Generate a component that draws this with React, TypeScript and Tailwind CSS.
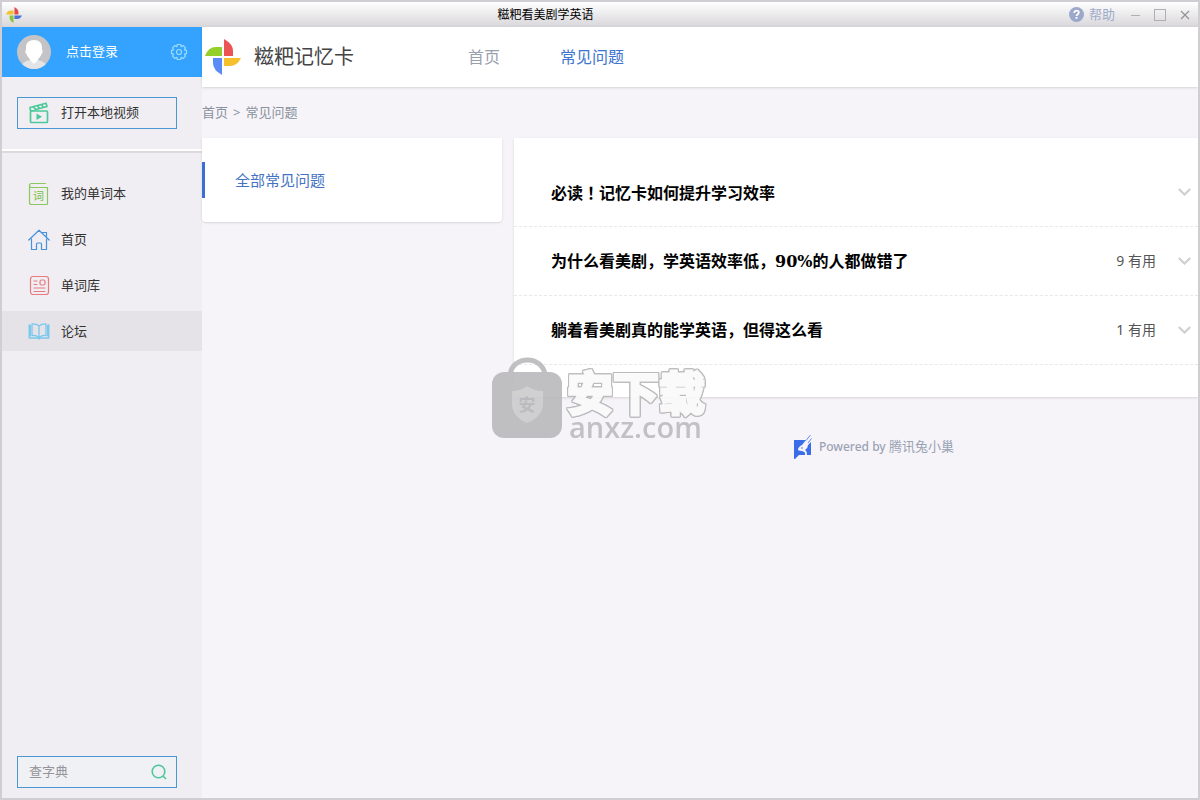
import { useState, type ReactNode } from "react";

const Pinwheel = ({ colors, className }: { colors: string[]; className: string }) => (
  <svg viewBox="0 0 36 36" className={className} aria-hidden="true">
    <path d="M0 17Q3 8 11 8H17V17Z" fill={colors[0]} />
    <path d="M19 0Q28 5 28 12V17H19Z" fill={colors[1]} />
    <path d="M19 19H36Q32 27 25 27H19Z" fill={colors[2]} />
    <path d="M8 19H17V36Q8 31 8 24Z" fill={colors[3]} />
  </svg>
);

const WordBookIcon = () => (
  <svg width="22" height="24" viewBox="0 0 22 24" fill="none" stroke="#8cc95c" strokeWidth="1.200" strokeLinecap="round">
    <path d="M1.500 4V20.500Q1.500 22.500 3.500 22.500H18.500Q19.500 22.500 19.500 21.500V5.500H3.500Q1.500 5.500 1.500 3.500T3.500 1.500H17.500" />
    <text x="5" y="18" fontSize="11" fontWeight="500" fill="#8cc95c" stroke="none">词</text>
  </svg>
);

const HomeIcon = () => (
  <svg width="22" height="22" viewBox="0 0 22 22" fill="none" stroke="#4792dc" strokeWidth="1.200" strokeLinecap="round" strokeLinejoin="round">
    <path d="M.8 11L11 1.200L21.200 11M3.500 10V20.500H8.500V15Q8.500 14 9.500 14H12.500Q13.500 14 13.500 15V20.500H18.500V10M14.500 3.500H18.500V7.500" />
  </svg>
);

const LibraryIcon = () => (
  <svg width="22" height="22" viewBox="0 0 22 22" fill="none" stroke="#e77b7f" strokeWidth="1.200" strokeLinecap="round">
    <rect x="2.500" y="1.500" width="18" height="18" rx="2.500" />
    <rect x="12" y="5" width="5" height="5" rx="1.500" />
    <path d="M6 6H9M6 9.500H9M6 13H17M6 16.500H17" />
  </svg>
);

const ForumIcon = () => (
  <svg width="22" height="22" viewBox="0 0 22 22" fill="none" stroke="#78c8ee" strokeWidth="1.300" strokeLinejoin="round">
    <path d="M11 5C9 3 6.500 2.700 4 2.800V14.500C6.500 14.300 9 14.800 11 16.500C13 14.800 15.500 14.300 18 14.500V2.800C15.500 2.700 13 3 11 5ZM11 5V16.500" />
    <path d="M2.200 4H1.200V17H9.500L11 18L12.500 17H20.800V4H19.800M2.300 4V15.500M19.700 4V15.500" />
  </svg>
);

const ClapperIcon = () => (
  <svg width="20" height="22" viewBox="0 0 20 22" fill="none" stroke="#4cc99b" strokeWidth="1.700" strokeLinejoin="round">
    <rect x="1.500" y="9" width="17" height="11.500" rx="1" />
    <path d="M1.500 9L1 5.500L17 1.200L18 4.500L1.500 9M4.500 5L6.500 7.500M8.500 3.800L10.500 6.500M12.500 2.700L14.500 5.400" />
    <path d="M7.500 11.500V18L13 14.700Z" fill="#4cc99b" stroke="none" />
  </svg>
);

const GearIcon = () => (
  <svg width="18" height="18" viewBox="0 0 18 18" fill="none" stroke="#9adbf8" strokeWidth="1.200" strokeLinejoin="round">
    <path d="M7.300 1.500H10.700L11.200 3.600L13.200 2.500L15.500 4.800L14.400 6.800L16.500 7.300V10.700L14.400 11.200L15.500 13.200L13.200 15.500L11.200 14.400L10.700 16.500H7.300L6.800 14.400L4.800 15.500L2.500 13.200L3.600 11.200L1.500 10.700V7.300L3.600 6.800L2.500 4.800L4.800 2.500L6.800 3.600Z" />
    <circle cx="9" cy="9" r="2.500" />
  </svg>
);

const Avatar = () => (
  <svg width="34" height="34" viewBox="0 0 34 34" aria-hidden="true">
    <defs>
      <clipPath id="avatar">
        <circle cx="17" cy="17" r="17" />
      </clipPath>
    </defs>
    <g clipPath="url(#avatar)">
      <rect width="34" height="34" fill="#c4c4c6" />
      <path d="M3 34Q4 27 13 25H21Q30 27 31 34Z" fill="#e4e4e6" />
      <path d="M13 21H21V25L17 29L13 25Z" fill="#fff" />
      <path d="M17 5C22 5 25 8 25 12V15C26 15 26 18 24.500 19C23 23 20 26 17 26S11 23 9.500 19C8 18 8 15 9 15V12C9 8 12 5 17 5Z" fill="#fff" />
    </g>
  </svg>
);

const RabbitIcon = () => (
  <svg width="18" height="24" viewBox="0 0 18 24" aria-hidden="true">
    <path d="M0 5H12L8 10Q4 12 4 15Q5 16 8 16Q12 17 11 20H5L1 24H0Z" fill="#3a6ee8" />
    <path d="M17 7V20H13Q13 16 11 15Q14 13 14 10Z" fill="#3a6ee8" />
    <path d="M16.500 0L12 5.500M17.500 3.500L14 8" stroke="#3a6ee8" strokeWidth=".8" />
    <circle cx="8" cy="13" r=".8" fill="#3a6ee8" />
  </svg>
);

const Watermark = () => (
  <div className="pointer-events-none absolute left-[490px] top-[355px] flex gap-1 text-[#bcbcbe] opacity-90">
    <svg width="71" height="82" viewBox="0 0 71 82" aria-hidden="true">
      <path d="M18 18C20 -2 51 -2 53 18" fill="none" stroke="#bababc" strokeWidth="5" />
      <rect y="15" width="70" height="66" rx="12" fill="#bababc" />
      <path d="M35 29Q42 34 51 34V48Q50 60 35 66Q21 60 20 48V34Q29 34 35 29Z" fill="#cbcbcd" />
      <text x="35" y="54" textAnchor="middle" fontSize="17" fontWeight="700" fill="#b6b6b8">安</text>
    </svg>
    <div className="pt-3">
      <p className="text-[46px] font-bold leading-[46px] text-[#fafafa] [-webkit-text-stroke:3px_#fafafa] [filter:drop-shadow(1px_0_0_#b4b4b6)_drop-shadow(-1px_0_0_#b4b4b6)_drop-shadow(0_1px_0_#b4b4b6)_drop-shadow(0_-1px_0_#b4b4b6)]">
        安下载
      </p>
      <p className="pl-[2px] font-['Open_Sans'] text-[29px] font-semibold leading-6">anxz.com</p>
    </div>
  </div>
);

const menu: { label: string; icon: ReactNode }[] = [
  { label: "我的单词本", icon: <WordBookIcon /> },
  { label: "首页", icon: <HomeIcon /> },
  { label: "单词库", icon: <LibraryIcon /> },
  { label: "论坛", icon: <ForumIcon /> },
];

const questions = [
  { title: "必读！记忆卡如何提升学习效率", useful: 0 },
  { title: "为什么看美剧，学英语效率低，90%的人都做错了", useful: 9 },
  { title: "躺着看美剧真的能学英语，但得这么看", useful: 1 },
];

const TitleBar = () => (
  <header className="flex h-[25px] items-center bg-linear-to-b from-white to-[#d8d6d9] pl-1 pr-2">
    <Pinwheel className="size-4" colors={["#f2c230", "#e5484d", "#4a6fd8", "#8cc63f"]} />
    <h1 className="flex-1 text-center text-xs text-black">糍粑看美剧学英语</h1>
    <button className="flex items-center gap-[5px] text-[13px] text-[#a0abca]">
      <svg width="15" height="15" viewBox="0 0 15 15" aria-hidden="true">
        <circle cx="7.500" cy="7.500" r="7.500" fill="#9ca8cb" />
        <path d="M5.200 6Q5.200 3.700 7.500 3.700T9.800 5.700Q9.800 6.700 8.500 7.400Q7.500 8 7.500 9" fill="none" stroke="#fff" strokeWidth="1.700" />
        <rect x="6.600" y="10" width="1.800" height="1.800" fill="#fff" />
      </svg>
      帮助
    </button>
    <div className="ml-4 flex items-center gap-[14px] text-[#b0aeb2]">
      <button aria-label="最小化">
        <svg width="9" height="12" viewBox="0 0 9 12" stroke="currentColor">
          <path d="M0 6.500H9" />
        </svg>
      </button>
      <button aria-label="最大化">
        <svg width="12" height="12" viewBox="0 0 12 12" fill="none" stroke="currentColor">
          <rect x=".5" y=".5" width="11" height="11" />
        </svg>
      </button>
      <button aria-label="关闭">
        <svg width="10" height="10" viewBox="0 0 10 10" stroke="#919094" strokeWidth="1.100">
          <path d="M1 1L9 9M9 1L1 9" />
        </svg>
      </button>
    </div>
  </header>
);

const Sidebar = () => {
  const [active, setActive] = useState("论坛");

  return (
    <aside className="flex w-[200px] shrink-0 flex-col bg-[#f0eef2] text-[13px] text-[#333]">
      <div className="flex h-[50px] items-center bg-[#33a3ff] pl-[15px] pr-[14px] text-white">
        <Avatar />
        <button className="ml-[15px]">点击登录</button>
        <button className="ml-auto" aria-label="设置">
          <GearIcon />
        </button>
      </div>
      <div className="border-b-2 border-white px-[15px] py-5">
        <button className="flex h-8 w-[160px] items-center gap-3 border border-[#4a98d3] pl-[11px]">
          <ClapperIcon />
          打开本地视频
        </button>
      </div>
      <nav className="flex flex-col gap-[6px] border-t-2 border-[#dcdadd] pt-5">
        {menu.map((item) => (
          <button
            key={item.label}
            onClick={() => setActive(item.label)}
            className={`flex h-10 items-center gap-[11px] pl-[26px] pt-px ${active === item.label ? "bg-[#e5e3e7]" : ""}`}
          >
            {item.icon}
            {item.label}
          </button>
        ))}
      </nav>
      <form className="mx-[15px] mb-[10px] mt-auto flex h-8 w-[160px] items-center border border-[#4a98d3] bg-[#eff1f4] pl-[11px] pr-[9px]">
        <input
          aria-label="查字典"
          placeholder="查字典"
          className="min-w-0 flex-1 outline-none placeholder:text-[#96949a]"
        />
        <button type="button" aria-label="搜索">
          <svg width="16" height="16" viewBox="0 0 16 16" fill="none" stroke="#4fc79a" strokeWidth="1.600">
            <circle cx="7.500" cy="7.500" r="6.300" />
            <path d="M12 12L15 15" />
          </svg>
        </button>
      </form>
    </aside>
  );
};

const QuestionList = () => (
  <ul className="bg-white pb-8 pt-5 shadow-sm">
    {questions.map((q) => (
      <li key={q.title} className="border-b border-dashed border-[#e8e8ea]">
        <button className="flex h-[68px] w-full items-center pl-[37px] pr-[7px] text-left">
          <span className="flex-1 text-base font-bold text-black">
            {q.title.split(/(90%|！)/).map((part) => {
              if (part === "90%") return <span key={part} className="font-['DejaVu_Serif']">{part}</span>;
              if (part === "！") return <span key={part} lang="zh-TW" className="font-['Noto_Sans_CJK_TC']">{part}</span>;
              return part;
            })}
          </span>
          {q.useful > 0 && <span className="mr-[22px] text-sm text-[#555]">{q.useful} 有用</span>}
          <svg width="13" height="8" viewBox="0 0 13 8" fill="none" stroke="#cfcfd1" strokeWidth="2.200" aria-hidden="true">
            <path d="M.8 1L6.500 6.500L12.200 1" />
          </svg>
        </button>
      </li>
    ))}
  </ul>
);

export default function App() {
  return (
    <div className="relative flex min-h-screen flex-col overflow-hidden border-2 border-[#d0ced2] bg-[#f6f4f8] font-['Noto_Sans','Noto_Sans_CJK_SC',sans-serif]" lang="zh-CN">
      <TitleBar />
      <div className="flex flex-1">
        <Sidebar />
        <div className="min-w-0 flex-1">
          <header className="flex h-[60px] items-center bg-white pl-[3px] shadow-sm">
            <Pinwheel className="size-9" colors={["#95d02a", "#ec5355", "#f6bf2c", "#5a8bf7"]} />
            <p className="ml-[13px] text-xl text-[#444]">糍粑记忆卡</p>
            <nav className="ml-[114px] flex gap-[60px] text-base">
              <a href="#home" className="text-[#9a9fb0]">首页</a>
              <a href="#faq" className="text-[#3d74cf]">常见问题</a>
            </nav>
          </header>
          <div className="flex h-[51px] items-center gap-[5px] text-[13px] text-[#8a919d]">
            <a href="#home">首页</a>
            <span>&gt;</span>
            <span>常见问题</span>
          </div>
          <main className="flex items-start gap-3">
            <nav className="w-[300px] shrink-0 rounded-b-sm bg-white py-6 shadow-sm">
              <a href="#all" className="flex h-9 items-center border-l-3 border-[#3b6fd6] pl-[30px] text-[15px] text-[#4573c4]">
                全部常见问题
              </a>
            </nav>
            <div className="min-w-0 flex-1">
              <QuestionList />
              <footer className="flex items-center justify-center gap-[7px] pl-9 pt-[38px] text-[13px] text-[#9aa3b5]">
                <RabbitIcon />
                <p>
                  <span className="text-xs font-medium">Powered by</span> 腾讯兔小巢
                </p>
              </footer>
            </div>
          </main>
        </div>
      </div>
      <Watermark />
    </div>
  );
}
